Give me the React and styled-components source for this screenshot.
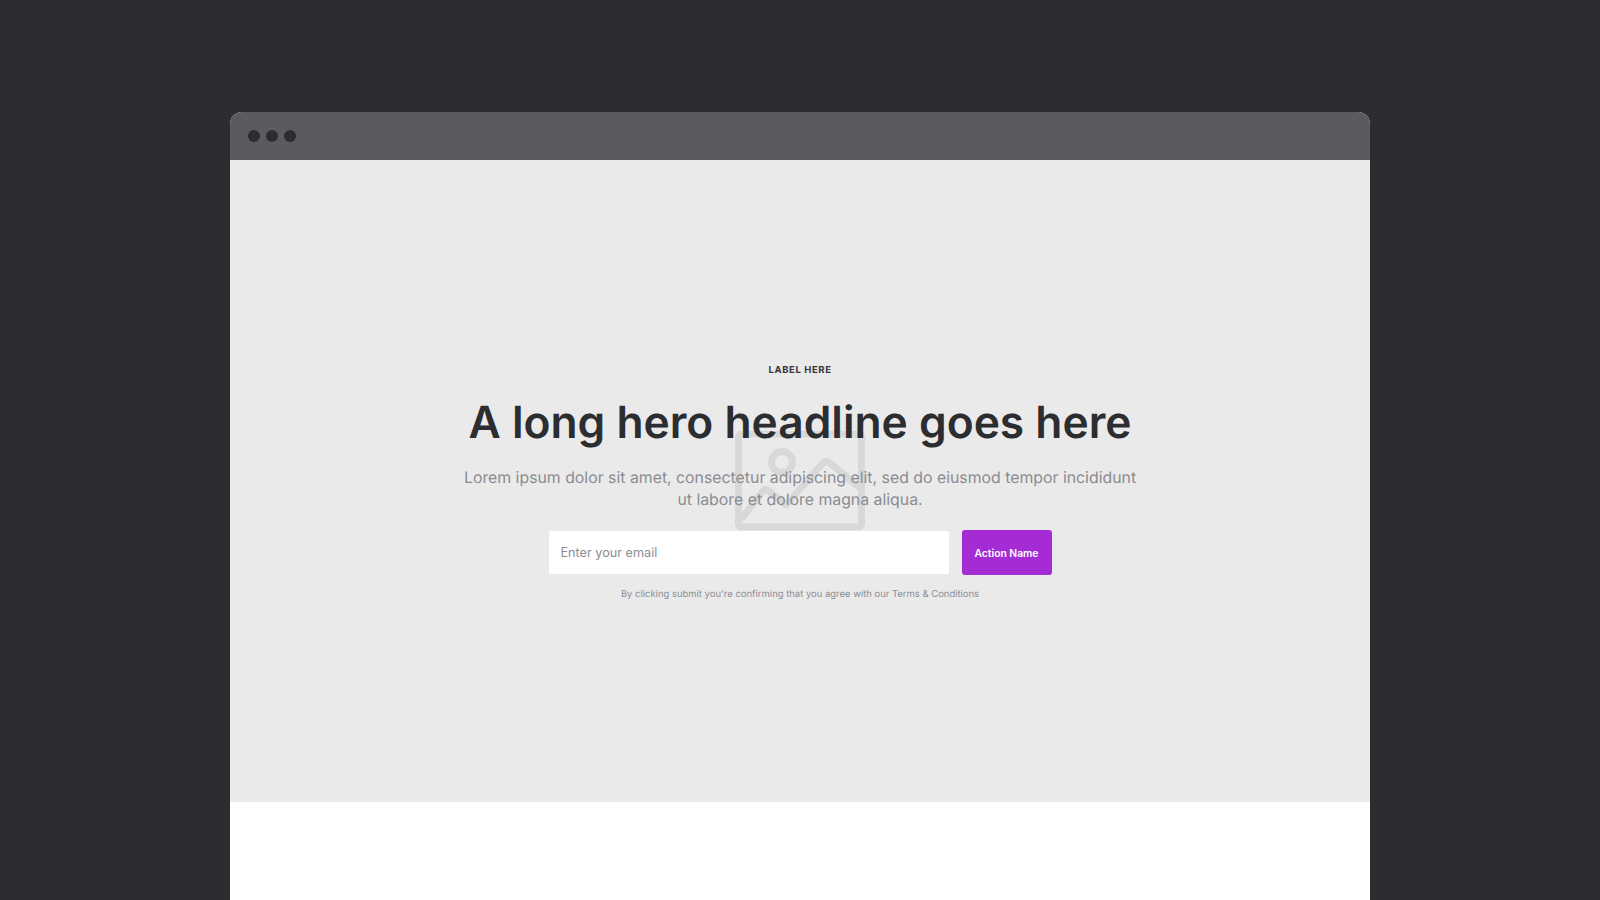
import React from "react";
import styled, { createGlobalStyle } from "styled-components";

const GlobalStyle = createGlobalStyle`
  html, body {
    margin: 0;
    height: 100%;
    overflow: hidden;
    background: #2c2d31;
    font-family: Inter, "Liberation Sans", sans-serif;
    text-rendering: geometricPrecision;
  }
`;

const Page = styled.div`
  height: 900px;
  padding-top: 112px;
  box-sizing: border-box;
  overflow: hidden;
`;

const Browser = styled.div`
  width: 1140px;
  margin: 0 auto;
  background: #fff;
  border-radius: 12px 12px 0 0;
  overflow: hidden;
`;

const TitleBar = styled.div`
  height: 48px;
  display: flex;
  align-items: center;
  gap: 6px;
  padding-left: 18px;
  background: #5a5b60;
`;

const Dot = styled.span`
  width: 12px;
  height: 12px;
  border-radius: 50%;
  background: #2c2d31;
`;

const Hero = styled.section`
  position: relative;
  height: 642px;
  display: flex;
  flex-direction: column;
  align-items: center;
  justify-content: center;
  background: #eaeaea;
`;

const Placeholder = styled.svg`
  position: absolute;
  left: 50%;
  top: 50%;
  width: 132px;
  height: 100px;
  transform: translate(-50%, -50%);
`;

const Content = styled.div`
  position: relative;
  padding-top: 4px;
  display: flex;
  flex-direction: column;
  align-items: center;
  text-align: center;
`;

const Label = styled.div`
  font-size: 9.5px;
  line-height: 14px;
  font-weight: 700;
  letter-spacing: 0.6px;
  color: #37383c;
`;

const Headline = styled.h1`
  margin: 16px 0 0;
  font-size: 44.3px;
  line-height: 56px;
  font-weight: 600;
  color: #2c2d31;
`;

const Lead = styled.p`
  margin: 17px 0 0;
  width: 690px;
  font-size: 15.83px;
  line-height: 22.4px;
  color: #8b8c92;
`;

const Form = styled.form`
  margin-top: 18.2px;
  display: flex;
  align-items: center;
  gap: 13px;
`;

const EmailInput = styled.input`
  width: 376px;
  height: 43px;
  padding: 0 12px;
  border: 0;
  border-radius: 2px;
  outline: none;
  background: #fff;
  font-family: inherit;
  font-size: 12.66px;
  color: #2c2d31;

  &::placeholder {
    color: #8b8c92;
    opacity: 1;
  }
`;

const ActionButton = styled.button`
  width: 90px;
  height: 45px;
  border: 0;
  border-radius: 3px;
  background: #a52cd4;
  color: #fff;
  font-family: inherit;
  font-size: 10.3px;
  font-weight: 600;
`;

const Terms = styled.p`
  margin: 13px 0 0;
  font-size: 9.46px;
  line-height: 14px;
  color: #8b8c92;
`;

const Below = styled.div`
  height: 98px;
  background: #fff;
`;

const App = () => {
  return (
    <>
      <GlobalStyle />
      <Page>
        <Browser>
          <TitleBar>
            <Dot />
            <Dot />
            <Dot />
          </TitleBar>
          <Hero>
            <Placeholder viewBox="0 0 132 100" fill="none" stroke="#d8d8d8" strokeWidth="7" strokeLinejoin="round" strokeLinecap="round">
              <rect x="4.5" y="3" width="123" height="93" rx="3" />
              <circle cx="48" cy="31" r="10.5" />
              <path d="M9 86 L28 61 Q31 57 35 60 L52 74 M52 74 L88 33 Q92 29 96 32 L126 57" />
            </Placeholder>
            <Content>
              <Label>LABEL HERE</Label>
              <Headline>A long hero headline goes here</Headline>
              <Lead>
                Lorem ipsum dolor sit amet, consectetur adipiscing elit, sed do eiusmod tempor incididunt ut labore et dolore magna aliqua.
              </Lead>
              <Form onSubmit={(e) => e.preventDefault()}>
                <EmailInput placeholder="Enter your email" />
                <ActionButton type="submit">Action Name</ActionButton>
              </Form>
              <Terms>By clicking submit you're confirming that you agree with our Terms &amp; Conditions</Terms>
            </Content>
          </Hero>
          <Below />
        </Browser>
      </Page>
    </>
  );
};

export default App;
